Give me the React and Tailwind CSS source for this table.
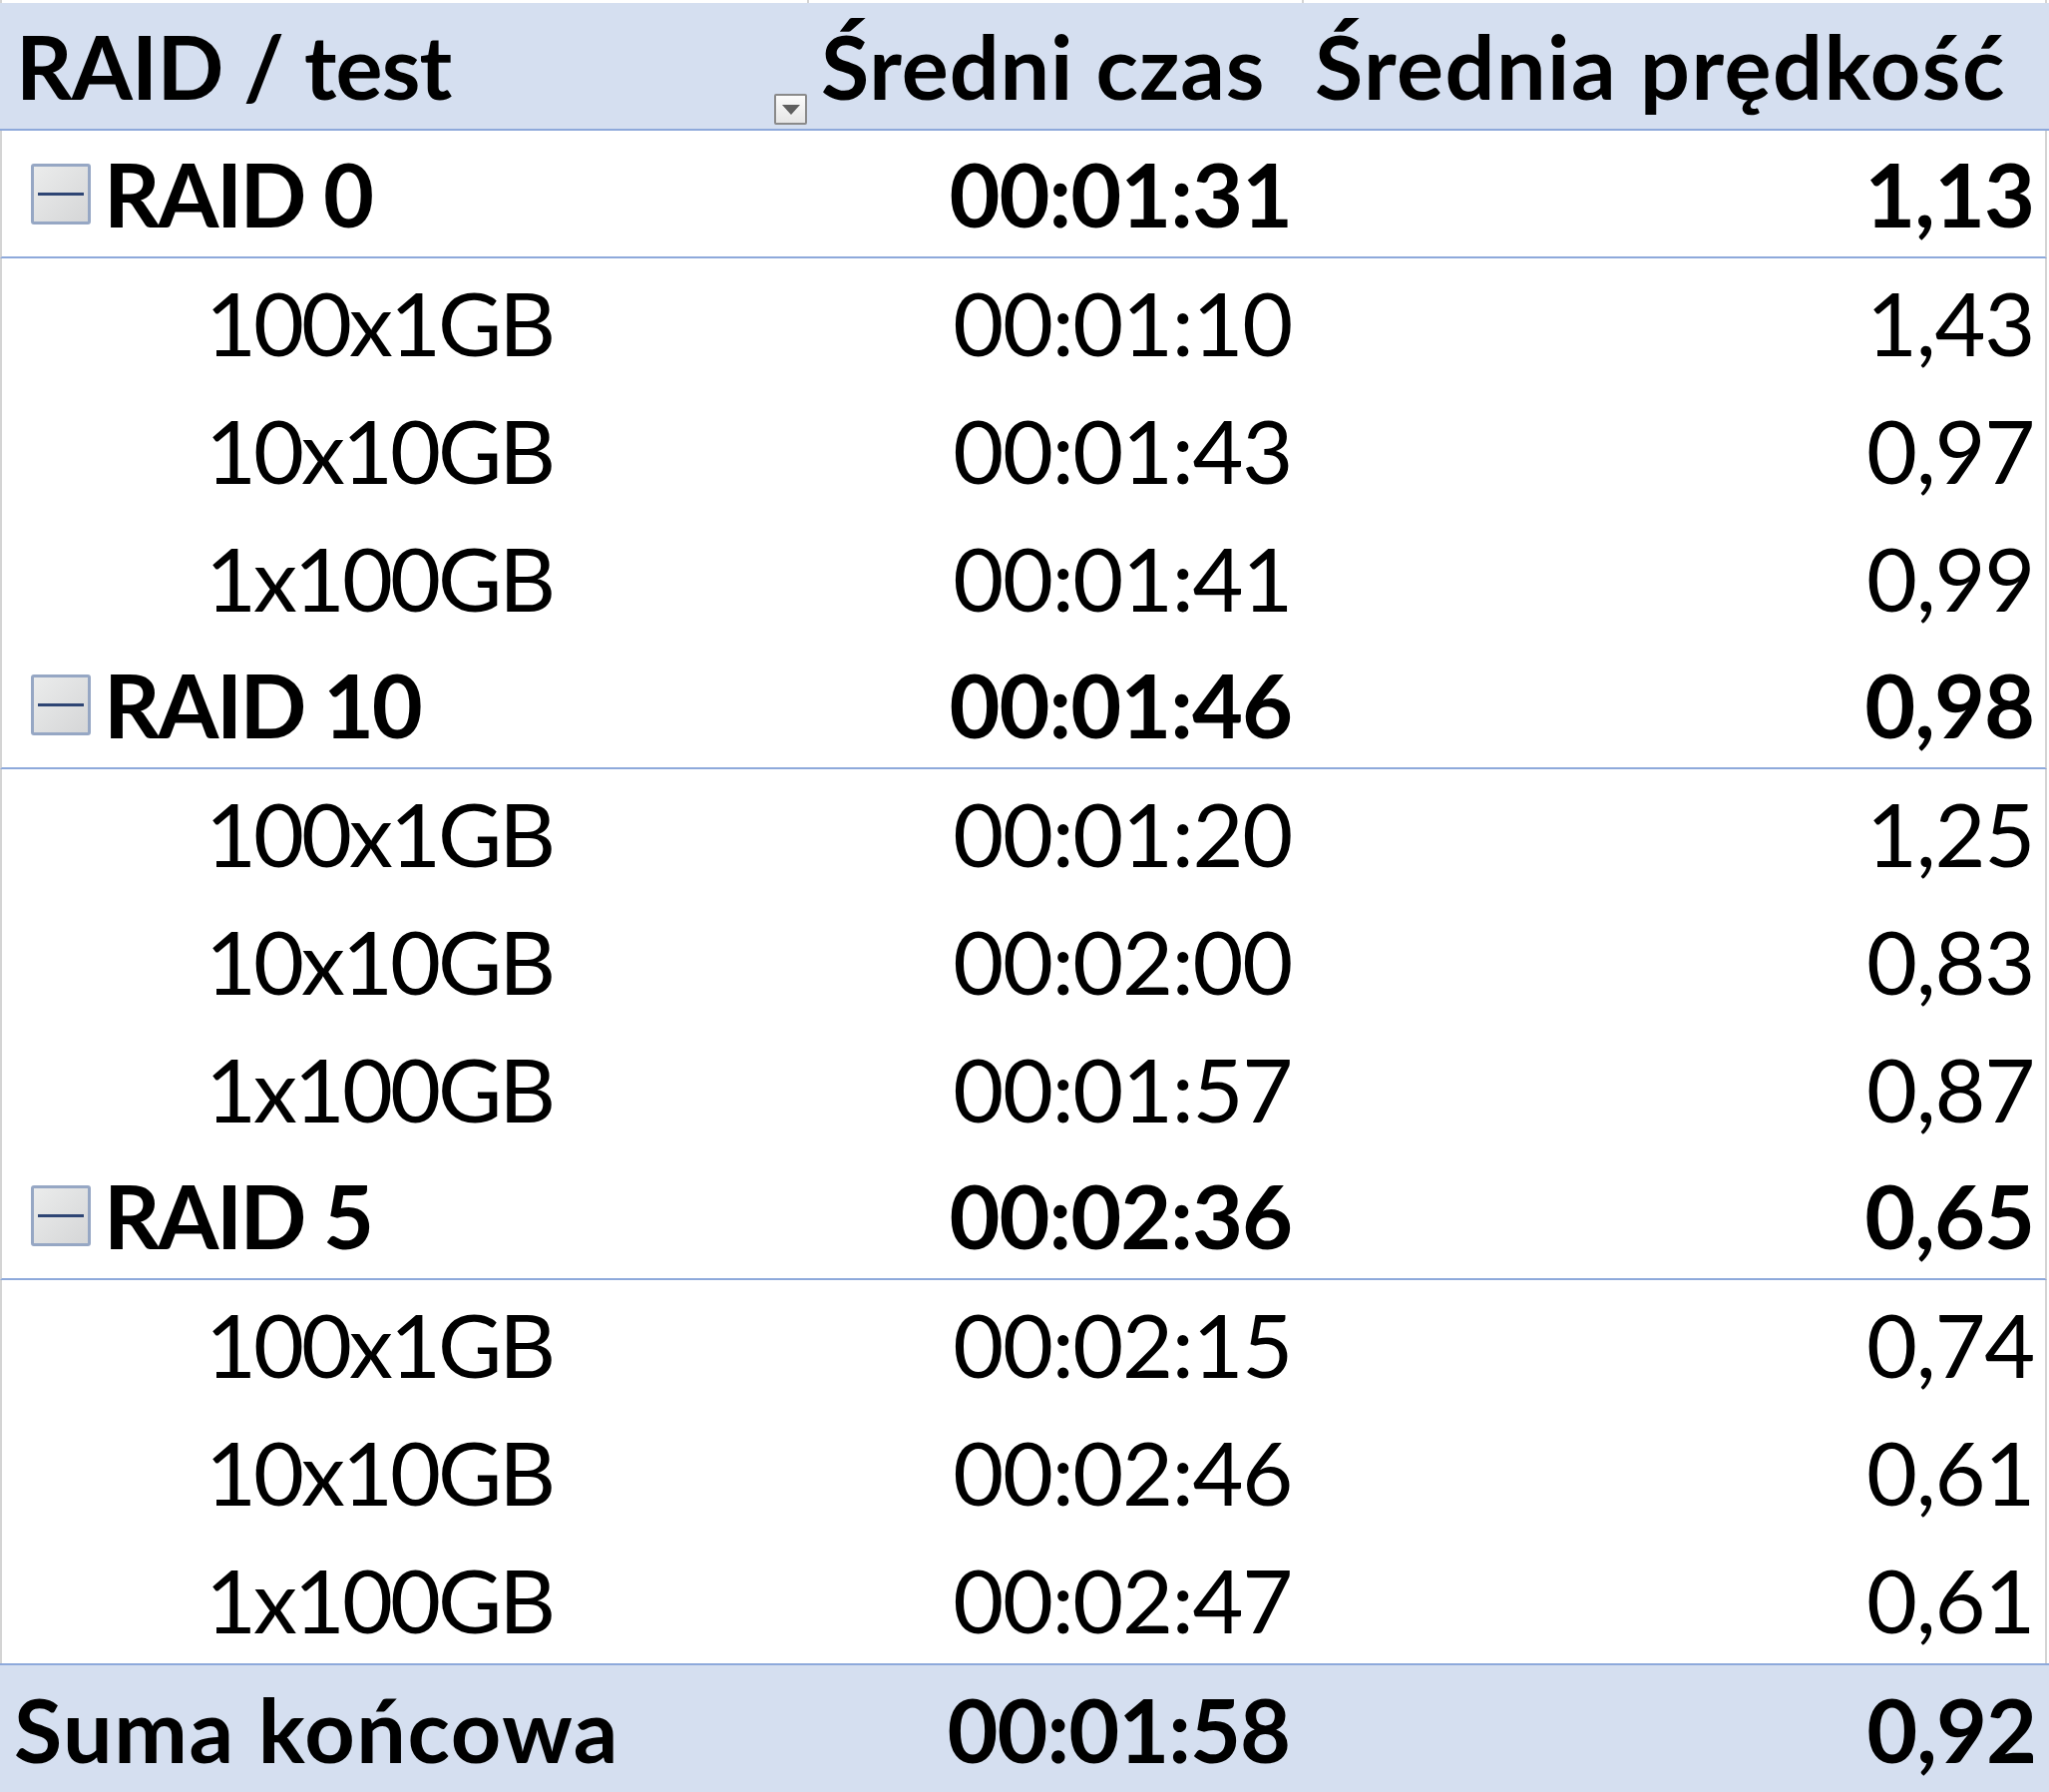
import React from 'react';

const rows = [
  { group: true, label: 'RAID 0', time: '00:01:31', speed: '1,13' },
  { label: '100x1GB', time: '00:01:10', speed: '1,43' },
  { label: '10x10GB', time: '00:01:43', speed: '0,97' },
  { label: '1x100GB', time: '00:01:41', speed: '0,99' },
  { group: true, label: 'RAID 10', time: '00:01:46', speed: '0,98' },
  { label: '100x1GB', time: '00:01:20', speed: '1,25' },
  { label: '10x10GB', time: '00:02:00', speed: '0,83' },
  { label: '1x100GB', time: '00:01:57', speed: '0,87' },
  { group: true, label: 'RAID 5', time: '00:02:36', speed: '0,65' },
  { label: '100x1GB', time: '00:02:15', speed: '0,74' },
  { label: '10x10GB', time: '00:02:46', speed: '0,61' },
  { label: '1x100GB', time: '00:02:47', speed: '0,61' },
];

// collapse (minus) button of a pivot group
const CollapseBox = () => (
  <div className="w-[60px] h-[61px] shrink-0 rounded-[3px] border-[3px] border-[#96a7c4] bg-gradient-to-br from-[#ebecec] to-[#d5d6d7] flex items-center justify-center">
    <div className="w-[46px] h-[3px] bg-[#2e4574]" />
  </div>
);

// filter dropdown in the header
const FilterButton = () => (
  <div className="w-[33px] h-[31px] mb-[4px] mr-[2px] self-end shrink-0 rounded-[2px] border-2 border-[#8a8a8a] bg-gradient-to-b from-[#fbfbfb] to-[#e6e6e6] flex items-center justify-center">
    <svg width="18" height="10" viewBox="0 0 18 10">
      <polygon points="0,0 18,0 9,10" fill="#5f5f5f" />
    </svg>
  </div>
);

const GRID = 'grid grid-cols-[811px_496px_1fr]';

export default function App() {
  return (
    <div className="w-[2054px] bg-white text-black font-['Lato',sans-serif] text-[88px] leading-none">
      {/* gridline strip above the header */}
      <div className={`${GRID} h-[3px]`}>
        <div className="border-l-2 border-r-2 border-[#d4d4d4]" />
        <div className="border-r-2 border-[#d4d4d4]" />
        <div className="border-r-2 border-[#d4d4d4] mr-[2px]" />
      </div>

      {/* header */}
      <div className={`${GRID} h-[128px] bg-[#d5dff0] border-b-2 border-[#8ea9db] font-bold`}>
        <div className="flex items-center justify-between pl-[16px]">
          <span className="tracking-[-0.8px]">RAID / test</span>
          <FilterButton />
        </div>
        <div className="flex items-center pl-[12px] tracking-[0.9px]">Średni czas</div>
        <div className="flex items-center pl-[11px] tracking-[1.5px]">Średnia prędkość</div>
      </div>

      {/* body */}
      {rows.map((r, i) => (
        <div
          key={i}
          className={`${GRID} h-[128px] border-l-2 border-r-2 border-l-[#d4d4d4] border-r-[#d4d4d4] mr-[2px] ${
            r.group ? 'font-bold border-b-2 border-b-[#8ea9db]' : ''
          }`}
        >
          {r.group ? (
            <div className="flex items-center pl-[29px] gap-[13px]">
              <CollapseBox />
              <span className="tracking-[-2.4px]">{r.label}</span>
            </div>
          ) : (
            <div className="flex items-center pl-[204px] tracking-[-3px]">{r.label}</div>
          )}
          <div className={`flex items-center justify-end pr-[14px] ${r.group ? 'tracking-[-1px]' : 'tracking-[-1.3px]'}`}>
            {r.time}
          </div>
          <div className={`flex items-center justify-end pr-[11px] ${r.group ? 'tracking-[-1px]' : 'tracking-[-1.3px]'}`}>
            {r.speed}
          </div>
        </div>
      ))}

      {/* grand total */}
      <div className={`${GRID} h-[129px] bg-[#d5dff0] border-t-2 border-[#8ea9db] font-bold`}>
        <div className="flex items-center pl-[14px] tracking-[1.6px]">Suma końcowa</div>
        <div className="flex items-center justify-end pr-[14px] tracking-[-1px]">00:01:58</div>
        <div className="flex items-center justify-end pr-[13px] tracking-[-1px]">0,92</div>
      </div>
    </div>
  );
}
